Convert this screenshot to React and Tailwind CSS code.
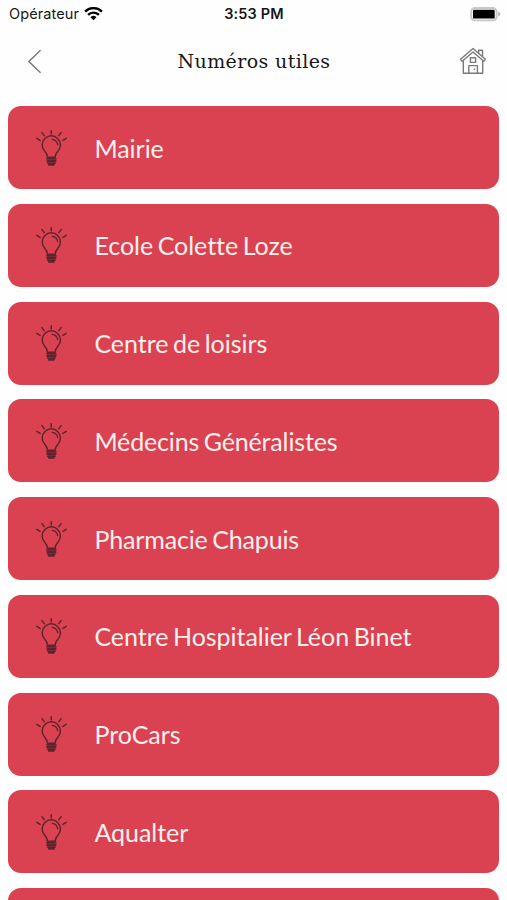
const contacts = [
  { name: "Mairie" },
  { name: "Ecole Colette Loze" },
  { name: "Centre de loisirs" },
  { name: "Médecins Généralistes", tight: true },
  { name: "Pharmacie Chapuis", tight: true },
  { name: "Centre Hospitalier Léon Binet" },
  { name: "ProCars" },
  { name: "Aqualter" },
  { name: "" },
];

const WifiIcon = () => (
  <svg className="w-[19px] h-[14px]" viewBox="0 0 19 14" fill="none" stroke="#000" strokeWidth="2.4">
    <path d="M1.1 4.6a12 12 0 0 1 16.8 0" />
    <path d="M4.1 7.9a7.6 7.6 0 0 1 10.8 0" />
    <path d="M6.5 10.3a4.3 4.3 0 0 1 6 0l-3 3z" fill="#000" stroke="none" />
  </svg>
);

const BatteryIcon = () => (
  <svg className="w-[31px] h-[15px]" viewBox="0 0 31 15" fill="none">
    <rect x="1.2" y="1" width="25.4" height="12.4" rx="3.6" stroke="#c8c8c8" strokeWidth="1.9" />
    <rect x="3" y="2.8" width="21.7" height="8.8" rx="1.2" fill="#000" />
    <path d="M28.2 4.8v4.6c1.3-.4 2-1.2 2-2.3s-.7-1.9-2-2.3z" fill="#b5b5b5" />
  </svg>
);

const HomeIcon = () => (
  <svg
    className="w-[28px] h-[28px]"
    viewBox="0 0 28 28"
    fill="none"
    stroke="#7a7a7a"
    strokeWidth="1.4"
    strokeLinejoin="round"
  >
    <path d="M14 1.5 1.6 12.3l1.6 2L14 5l10.8 9.3 1.6-2z" />
    <path d="M19.6 6.2V3.2h3.9v6.4" />
    <path d="M4.3 13.8v12.4h19.4V13.8" />
    <rect x="11.4" y="10.8" width="5.2" height="4.6" />
    <path d="M9.8 26v-7.4h8.6V26M15.4 21.6v1.4" />
  </svg>
);

const BulbIcon = () => (
  <svg
    className="w-[34px] h-[40px] shrink-0"
    viewBox="0 0 34 40"
    fill="none"
    stroke="#5c252d"
    strokeWidth="1.5"
    strokeLinecap="round"
    strokeLinejoin="round"
  >
    <path d="M17.2 2.7v3.2M8 4.6l2.2 3M27.2 4.6l-2.4 3M2.8 10.4l3.3 2M32.2 10.4l-3.3 2" />
    <path d="M13.5 29.2c-.1-3.2-1.3-4.4-2.9-6.1a9.1 9.1 0 1 1 13.4 0c-1.6 1.7-2.8 2.9-2.9 6.1z" />
    <path d="M18.2 11.4c3.2.4 5 2.4 5.4 5.3" strokeWidth="1.3" />
    <path d="M13.1 30.7h8.6M13.2 33h8.4M13.8 35.1h7.2" strokeWidth="1.9" />
    <path d="M14.9 36.7h5" strokeWidth="2" />
  </svg>
);

const ContactCard = ({ name, tight }) => (
  <button className="flex h-[83px] w-full shrink-0 items-center rounded-[13px] bg-[#da4251] pl-[25.5px] text-left">
    <BulbIcon />
    <span
      className={`ml-[26.5px] text-[25px] leading-[30px] [font-variant-ligatures:none] [word-spacing:-1.8px] text-[#fff0ee] ${
        tight ? "tracking-[-0.14px]" : "tracking-[-0.03px]"
      }`}
    >
      {name}
    </span>
  </button>
);

const App = () => {
  return (
    <div className="flex h-[900px] w-[507px] flex-col overflow-hidden bg-[#fefefe] font-['Lato',sans-serif]">
      <div className="grid h-[28px] shrink-0 grid-cols-3 items-center pl-[9px] pr-[6px] font-['Inter',sans-serif] text-[14.5px] text-[#171717]">
        <div className="flex items-center gap-[5px]">
          <span className="tracking-[0.1px]">Opérateur</span>
          <WifiIcon />
        </div>
        <span className="pr-[2px] text-center font-semibold tracking-[0.15px]">3:53 PM</span>
        <div className="flex justify-end">
          <BatteryIcon />
        </div>
      </div>

      <header className="flex h-[78px] shrink-0 items-start justify-between pl-[27px] pr-[20px] pt-[19px]">
        <svg className="mt-[2px] h-[25px] w-[14px]" viewBox="0 0 14 25" fill="none" stroke="#777" strokeWidth="1.5">
          <path d="M13.6 1.2 1.9 12.5l11.7 11.3" />
        </svg>
        <h1 className="ml-[8px] font-['DejaVu_Serif',serif] text-[19px] leading-[29px] tracking-[0.4px] text-[#171717]">
          Numéros utiles
        </h1>
        <HomeIcon />
      </header>

      <main className="flex flex-col gap-[14.75px] pl-[8.4px] pr-[7.6px]">
        {contacts.map((contact, i) => (
          <ContactCard key={i} {...contact} />
        ))}
      </main>
    </div>
  );
};

export default App;
